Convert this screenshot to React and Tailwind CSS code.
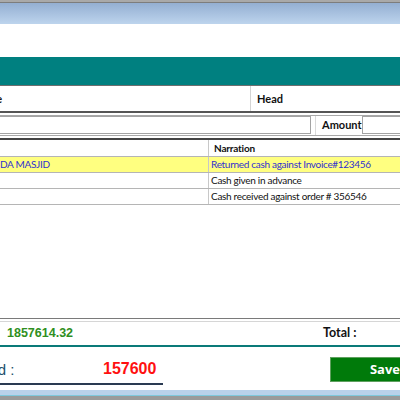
export default function App() {
  const f = { fontFamily: '"Lato", "Open Sans", sans-serif' };
  const arial = { fontFamily: '"Liberation Sans", Arial, sans-serif' };
  return (
    <div className="w-[400px] h-[400px] overflow-hidden bg-white flex flex-col" style={f}>
      <div className="h-[3px] bg-[#a9a9a9] border-b border-[#7d7d7d]" />
      <div className="h-[21px] bg-gradient-to-b from-[#94afd2] to-[#bdd4ed]" />
      <div className="h-[33px] bg-white" />
      <div className="h-[29px] bg-[#008080] border-b border-[#6e6e6e]" />
      {/* header row */}
      <div className="h-[25px] flex text-[11px] font-bold text-[#111]">
        <div className="w-[251px] border-r border-[#d4d4d4] flex items-center overflow-hidden pt-[2px]">
          <span className="-ml-[27px]">Name</span>
        </div>
        <div className="flex-1 flex items-center pl-[6px] pt-[2px]">Head</div>
      </div>
      <div className="h-[5px] border-t-2 border-b border-t-[#555] border-b-[#a8a8a8]" />
      {/* input row */}
      <div className="h-[19px] flex items-start text-[11px] font-bold text-[#111]">
        <div className="w-[311px] h-[18px] border border-l-0 border-[#a3a3a3] bg-white" />
        <div className="w-[5px] h-full border-r border-[#dadada]" />
        <div className="w-[46px] h-[18px] flex items-center pl-[6px]">Amount</div>
        <div className="flex-1 h-[18px] border border-r-0 border-[#a3a3a3] bg-white" />
      </div>
      <div className="h-[5px] border-t border-b-2 border-t-[#a8a8a8] border-b-[#444]" />
      {/* table header */}
      <div className="h-[16px] flex text-[10px] tracking-[-0.2px] font-bold text-[#111]">
        <div className="w-[209px] border-r border-[#c8c8c8]" />
        <div className="flex-1 flex items-center pl-[5px]">Narration</div>
      </div>
      {[
        { a: "DA MASJID", b: "Returned cash against Invoice#123456", y: true },
        { a: "", b: "Cash given in advance" },
        { a: "", b: "Cash received against order # 356546" },
      ].map((r, i) => (
        <div
          key={i}
          className={
            "h-[16px] flex text-[10px] tracking-[-0.3px] border-t border-[#b5b5b5] " +
            (r.y ? "bg-[#ffff80] text-[#3030d0]" : "bg-white text-[#111]")
          }
        >
          <div className="w-[209px] border-r border-[#c8c8c8] flex items-center overflow-hidden">
            {r.a}
          </div>
          <div className="flex-1 flex items-center pl-[2px]">{r.b}</div>
        </div>
      ))}
      <div className="h-[114px] border-t border-[#b5b5b5]" />
      <div className="h-[4px] border-t border-b border-t-[#7a7a7a] border-b-[#d6d6d6]" />
      {/* total row */}
      <div className="h-[23px] flex items-center">
        <div className="w-[323px] pl-[7px] text-[12.5px] font-semibold text-[#2f8f22]" style={arial}>
          1857614.32
        </div>
        <div className="text-[12.5px] font-bold text-[#111]">Total :</div>
      </div>
      <div className="h-[2px] bg-[#0a7a78]" />
      {/* bottom */}
      <div className="h-[43px] flex items-start">
        <div className="w-[163px] h-[38px] flex items-end border-b-2 border-[#2a3a52]">
          <div className="w-[103px] h-[36px] flex items-end pb-[2px] text-[15px] text-[#22506c] overflow-hidden" style={arial}>
            <span className="-ml-[24px]">Paid :</span>
          </div>
          <div className="h-[36px] flex items-end pb-[2px] text-[16px] font-bold text-[#ff1010]" style={arial}>
            157600
          </div>
        </div>
        <div className="w-[167px]" />
        <div
          className="flex-1 mt-[10px] h-[25px] bg-[#007a0a] border border-r-0 border-[#5fa05f] flex items-center pl-[39px] text-[13px] font-bold text-white"
          style={{ fontFamily: '"Open Sans", sans-serif' }}
        >
          Save
        </div>
      </div>
      <div className="h-[5px] bg-[#b9d1ea]" />
      <div className="h-[1px] bg-[#7fc8dc]" />
      <div className="flex-1 bg-[#9a9a9a]" />
    </div>
  );
}
